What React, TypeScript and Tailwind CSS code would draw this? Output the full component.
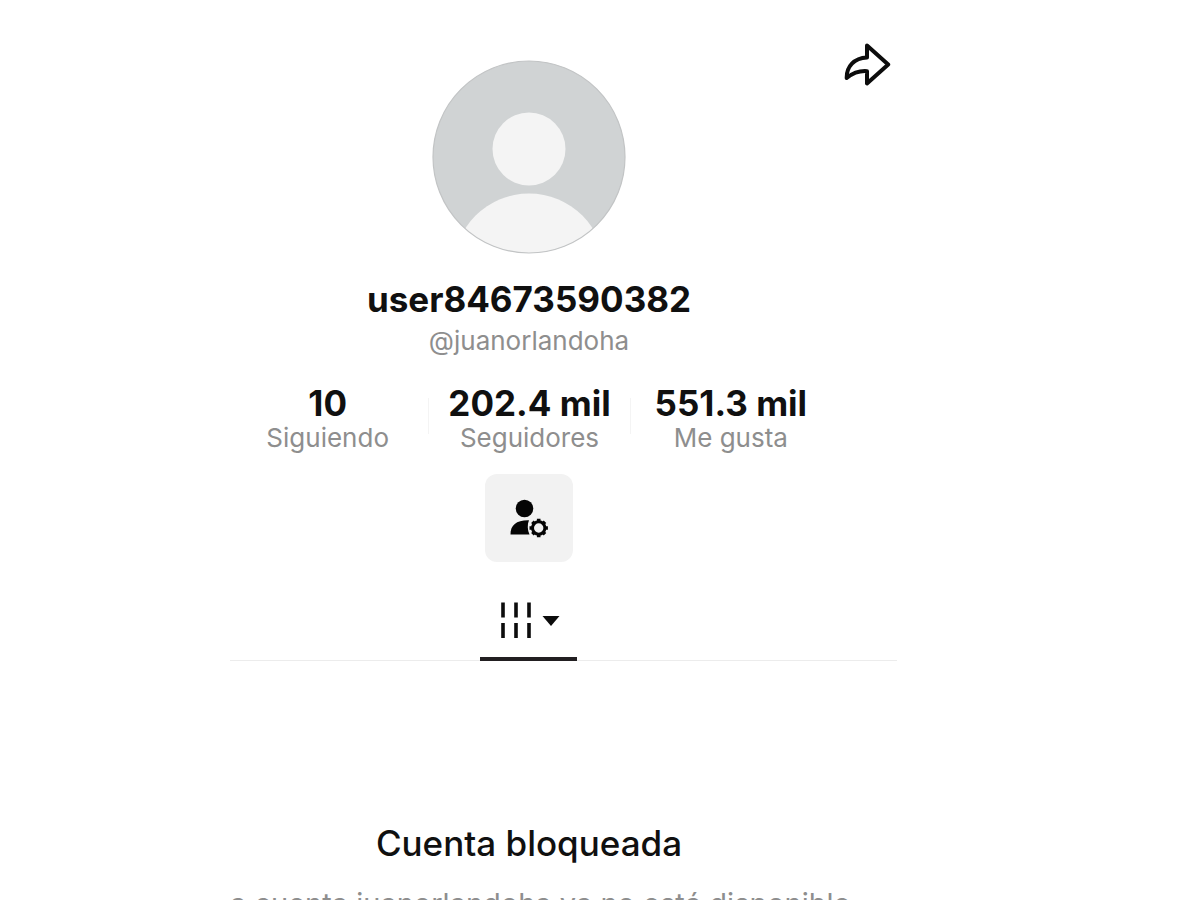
interface Stat {
  value: string;
  label: string;
}

const STATS: Stat[] = [
  { value: '10', label: 'Siguiendo' },
  { value: '202.4 mil', label: 'Seguidores' },
  { value: '551.3 mil', label: 'Me gusta' },
];

function Avatar() {
  return (
    <svg className="size-[194px]" viewBox="0 0 194 194" role="img" aria-label="Foto de perfil">
      <defs>
        <clipPath id="avatar-clip">
          <circle cx="97" cy="97" r="96" />
        </clipPath>
      </defs>
      <circle cx="97" cy="97" r="96" fill="#d0d3d4" />
      <g clipPath="url(#avatar-clip)" fill="#f4f4f4">
        <circle cx="97" cy="89" r="36.5" />
        <circle cx="97" cy="209" r="75.5" />
      </g>
      <circle cx="97" cy="97" r="96" fill="none" stroke="#c2c4c5" strokeWidth="1.2" />
    </svg>
  );
}

function ShareIcon() {
  return (
    <svg
      className="h-11 w-12"
      viewBox="0 0 48 44"
      fill="none"
      stroke="#0c0c0c"
      strokeWidth="4"
      strokeLinejoin="round"
    >
      <path d="M24 3.5 45.2 22.5 24 41.5V29.2C16.5 28.6 10 31 3.7 36C3.5 24.5 11 16 24 15.4Z" />
    </svg>
  );
}

function UserGearIcon() {
  return (
    <svg className="h-10 w-10" viewBox="0 0 40 40">
      <circle cx="15.5" cy="10.5" r="8.8" fill="#050505" />
      <path d="M1.5 36.5C1.5 27 7.5 22 20 22.3C18.2 26.5 18.4 32 20.5 36.5Z" fill="#050505" />
      <g stroke="#050505" fill="none">
        <circle cx="29.7" cy="30" r="6.2" strokeWidth="3" />
        <path
          d="M29.7 20.8v3M29.7 36.2v3M20.5 30h3M35.9 30h3M23.4 23.7l2 2M34 34.3l2 2M23.4 36.3l2-2M34 25.7l2-2"
          strokeWidth="3.6"
        />
      </g>
    </svg>
  );
}

function FeedIcon() {
  return (
    <svg className="h-9 w-8" viewBox="0 0 32 36" stroke="#0c0c0c" strokeWidth="3.6">
      <path d="M3 .5v15M16 .5v15M29 .5v15M3 21v15M16 21v15M29 21v15" />
    </svg>
  );
}

export default function App() {
  return (
    <div className="h-screen overflow-hidden bg-white pl-[227px] font-['Inter',sans-serif] text-[#101010]">
      <main className="max-w-[670px]">
        {/* Avatar y compartir */}
        <header className="flex items-start">
          <div className="flex flex-1 justify-center pt-[60px]">
            <Avatar />
          </div>
          <div className="flex w-[66px] justify-end pt-[42px] pr-[6px]">
            <button type="button" aria-label="Compartir">
              <ShareIcon />
            </button>
          </div>
        </header>

        {/* Perfil */}
        <section className="flex flex-col items-center pt-6 pr-[66px]">
          <h1 className="text-[35px] leading-[42px] font-bold">user84673590382</h1>
          <p className="text-[26px] leading-[42px] text-[#8e8e8e]">@juanorlandoha</p>

          <div className="mt-6 flex w-full">
            {STATS.map((stat, i) => (
              <div key={stat.label} className="flex flex-1 basis-0">
                {i > 0 && <span className="mt-3 h-9 w-px bg-[#f4f4f4]" />}
                <div className="flex flex-1 flex-col items-center whitespace-nowrap">
                  <strong className="text-[35px] leading-[34px] font-bold">{stat.value}</strong>
                  <span className="text-[26px] leading-[36px] text-[#8e8e8e]">{stat.label}</span>
                </div>
              </div>
            ))}
          </div>

          <button
            type="button"
            aria-label="Gestionar cuenta"
            className="mt-[18px] flex size-[88px] items-center justify-center rounded-xl bg-[#f2f2f2]"
          >
            <UserGearIcon />
          </button>
        </section>

        {/* Pestañas */}
        <nav className="mt-8 ml-[3px] flex justify-center border-b border-[#ececec] pr-[70px]">
          <button
            type="button"
            aria-label="Publicaciones"
            className="-mb-px flex h-[67px] w-[97px] justify-center gap-2 border-b-4 border-[#221f21] pt-2 pl-[2px]"
          >
            <FeedIcon />
            <svg className="mt-[13px] h-3 w-5" viewBox="0 0 20 12" fill="#0c0c0c">
              <path d="M2.5 1h17L11 11Z" />
            </svg>
          </button>
        </nav>

        {/* Aviso */}
        <section className="pt-40">
          <h2 className="pr-[66px] text-center text-[35px] leading-[44px] font-medium">
            Cuenta bloqueada
          </h2>
          <p className="mt-5 ml-[3px] text-[29px] leading-[38px] whitespace-nowrap text-[#8e8e8e]">
            a cuenta juanorlandoha ya no está disponible
          </p>
        </section>
      </main>
    </div>
  );
}
